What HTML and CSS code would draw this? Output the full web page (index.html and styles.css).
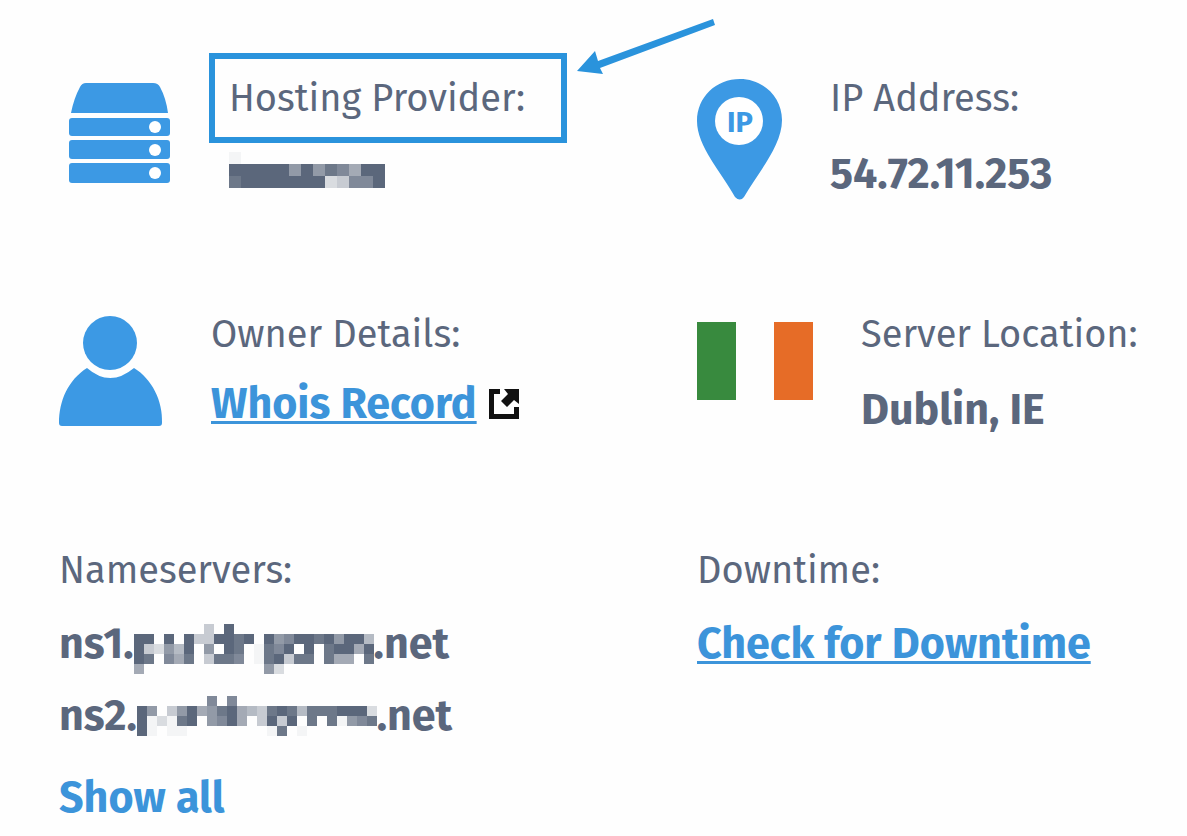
FILE: index.html
```html
<!DOCTYPE html>
<html lang="en">
<head>
    <meta charset="UTF-8">
    <meta name="viewport" content="width=device-width, initial-scale=1.0">
    <title>Hosting Details</title>
    <link rel="stylesheet" href="styles.css">
</head>
<body>

    <main class="details">

        <!-- Hosting provider -->
        <section class="item">
            <svg class="icon" width="122" height="106" viewBox="0 0 122 106" aria-hidden="true">
                <path d="M27 5H94Q99 5 101 9Q107 20 109 35H12Q15 20 21 9Q23 5 27 5Z"/>
                <rect x="10" y="40" width="101" height="18" rx="3"/>
                <rect x="10" y="62" width="101" height="19" rx="3"/>
                <rect x="10" y="85" width="101" height="20" rx="3"/>
                <g fill="#fff">
                    <circle cx="96" cy="49" r="6"/>
                    <circle cx="96" cy="72" r="6"/>
                    <circle cx="96" cy="95" r="6"/>
                </g>
            </svg>
            <div class="text">
                <h2 class="label highlight">Hosting Provider:</h2>
                <svg class="mosaic host" data-size="12" data-rows="1000000000000,9999969687599,8999999923779" aria-hidden="true"></svg>
            </div>
            <svg class="arrow" width="142" height="60" viewBox="0 0 142 60" aria-hidden="true">
                <path d="M0 55L18 35L21 45L136 3L138 9L23 52L26 58Z"/>
            </svg>
        </section>

        <!-- IP address -->
        <section class="item">
            <svg class="icon" width="85" height="123" viewBox="0 0 85 123" aria-hidden="true">
                <path d="M43 1C66 1 85 19 85 42C85 68 62 93 47 119Q43 124 38 119C24 94 0 68 0 43C0 19 19 1 43 1Z"/>
                <circle cx="42" cy="43" r="24" fill="#fff"/>
                <text class="pin-text" x="43" y="54" text-anchor="middle">IP</text>
            </svg>
            <div class="text">
                <h2 class="label">IP Address:</h2>
                <p class="value fact">54.72.11.253</p>
            </div>
        </section>

        <!-- Owner -->
        <section class="item">
            <svg class="icon" width="104" height="113" viewBox="0 0 104 113" aria-hidden="true">
                <circle cx="51" cy="29" r="27"/>
                <path d="M28 54Q51 74 75 54C93 65 104 87 103 109Q103 112 100 112H3Q0 112 0 109C0 87 9 66 28 54Z"/>
            </svg>
            <div class="text">
                <h2 class="label">Owner Details:</h2>
                <p class="value whois">
                    <a class="link" href="#">Whois Record</a>
                    <svg class="external" width="30" height="30" viewBox="0 0 30 30" aria-hidden="true">
                        <path d="M0 0H11V5H5V25H25V18H30V30H0Z"/>
                        <path d="M15 0H30V15L25 11L18 18L12 12L19 5Z"/>
                    </svg>
                </p>
            </div>
        </section>

        <!-- Server location -->
        <section class="item">
            <svg class="icon" width="116" height="86" viewBox="0 0 116 86" role="img" aria-label="Ireland">
                <rect x="0" y="8" width="39" height="78" fill="#388a3e"/>
                <rect x="77" y="8" width="39" height="78" fill="#e66c27"/>
            </svg>
            <div class="text">
                <h2 class="label">Server Location:</h2>
                <p class="value fact">Dublin, IE</p>
            </div>
        </section>

        <!-- Nameservers -->
        <section class="item">
            <div class="text">
                <h2 class="label">Nameservers:</h2>
                <p class="value server">ns1.<svg class="mosaic" data-size="10" data-rows="000000030900000000000000,990909339989096799896994,932649060980187909089959,980758038870189388085508,500000000000062000000000" aria-hidden="true"></svg>.net</p>
                <p class="value server">ns2.<svg class="mosaic" data-size="10" data-rows="000000070700000000000000,960369568954389848889992,912189067950393908081678,910110000000018010000000,000000000000000000000000" aria-hidden="true"></svg>.net</p>
                <button class="show-all" type="button">Show all</button>
            </div>
        </section>

        <!-- Downtime -->
        <section class="item">
            <div class="text">
                <h2 class="label">Downtime:</h2>
                <p class="value"><a class="link" href="#">Check for Downtime</a></p>
            </div>
        </section>

    </main>

    <script>
        // Draw the hidden names as blocks, each digit is a shade from 0 (none) to 9 (full)
        document.querySelectorAll(".mosaic").forEach((svg) => {
            const size = Number(svg.dataset.size);
            const rows = svg.dataset.rows.split(",");
            let blocks = "";

            rows.forEach((row, y) => {
                [...row].forEach((shade, x) => {
                    if (shade !== "0") {
                        blocks += `<rect x="${x * size}" y="${y * size}" width="${size}" height="${size}" fill-opacity="${shade === "1" ? 0.06 : shade / 9}"/>`;
                    }
                });
            });

            svg.setAttribute("width", rows[0].length * size);
            svg.setAttribute("height", rows.length * size);
            svg.innerHTML = blocks;
        });
    </script>
</body>
</html>
```

FILE: styles.css
```css
body {
    margin: 0;
    font-family: "Fira Sans", "Noto Sans", sans-serif;
    background-color: #fefefe;
    color: #5b677d;
}

h2, p {
    margin: 0;
}

.details {
    display: grid;
    grid-template-columns: 1fr 490px;
    grid-auto-rows: minmax(236px, auto);
    padding: 78px 0 0 59px;
}

.item {
    position: relative;
    display: flex;
    align-items: flex-start;
    gap: 48px;
}

.icon {
    flex: none;
    fill: #3c99e4;
}

.pin-text {
    font-size: 29px;
    font-weight: bold;
}

.text {
    white-space: nowrap;
}

.label {
    position: relative;
    margin-bottom: 24px;
    font-size: 38px;
    line-height: 40px;
    font-weight: normal;
}

/* Frame round the hosting provider label */
.highlight::after {
    content: "";
    position: absolute;
    top: -25px;
    left: -20px;
    width: 346px;
    height: 78px;
    border: 6px solid #2a93dc;
}

.arrow {
    position: absolute;
    top: -62px;
    left: 518px;
    fill: #2a93dc;
}

.value {
    font-size: 43px;
    line-height: 60px;
    font-weight: bold;
}

.fact {
    padding-top: 2px;
}

.whois {
    display: flex;
    align-items: center;
    gap: 12px;
    margin-top: -4px;
}

.link {
    color: #3c94da;
    text-decoration-thickness: 3px;
    text-underline-offset: 3px;
}

.external {
    fill: #111;
}

.server {
    display: flex;
    align-items: flex-end;
    margin-bottom: 12px;
}

.mosaic {
    display: block;
    fill: #5b677b;
}

.host {
    margin-top: 34px;
}

.show-all {
    margin-top: 10px;
    padding: 0;
    border: none;
    background: none;
    color: #3c94da;
    font: inherit;
    font-size: 43px;
    line-height: 60px;
    font-weight: bold;
    cursor: pointer;
}
```
